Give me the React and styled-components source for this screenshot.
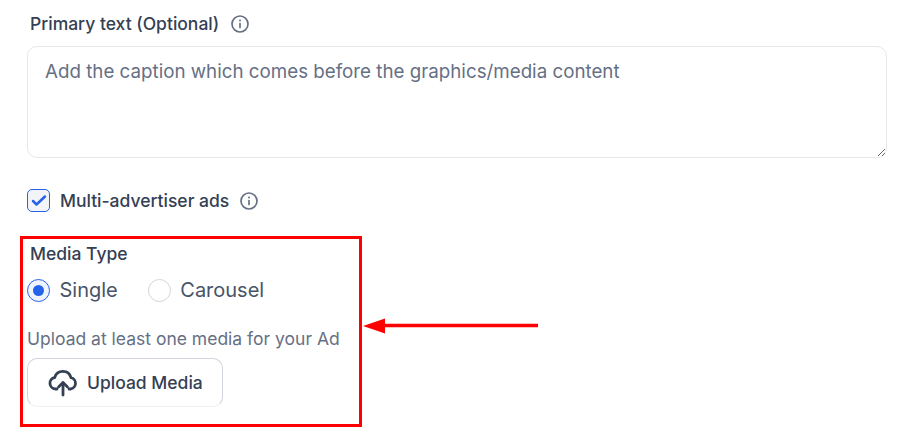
import React from "react";
import styled, { createGlobalStyle } from "styled-components";

const GlobalStyle = createGlobalStyle`
  html, body {
    margin: 0;
    padding: 0;
    background: #fff;
    font-family: Inter, "Noto Sans", sans-serif;
  }
`;

const Page = styled.div`
  position: relative;
  width: 910px;
  height: 432px;
  overflow: hidden;
  box-sizing: border-box;
  padding: 14px 23px 0 27px;
  display: flex;
  flex-direction: column;
`;

const LabelRow = styled.div`
  display: flex;
  align-items: center;
  gap: 12px;
  height: 20px;
  padding-left: 3px;
`;

const Label = styled.span`
  font-size: 17.5px;
  font-weight: 450;
  line-height: 20px;
  color: #344054;
`;

const InfoIcon = () => (
  <svg width="18" height="18" viewBox="0 0 18 18" fill="none" stroke="#667085" strokeWidth="1.7" strokeLinecap="round">
    <circle cx="9" cy="9" r="8" />
    <path d="M9 8.500v4" />
    <path d="M9 5.500v.1" strokeWidth="2" />
  </svg>
);

const TextArea = styled.textarea`
  display: block;
  box-sizing: border-box;
  width: 860px;
  height: 112px;
  margin-top: 12px;
  padding: 12px 17px;
  border: 1px solid #e4e7ec;
  border-radius: 10px;
  outline: none;
  font-family: inherit;
  font-size: 18.75px;
  line-height: 26px;
  color: #344054;

  &::placeholder {
    color: #667085;
    opacity: 1;
  }
`;

const CheckRow = styled.div`
  display: flex;
  align-items: center;
  gap: 10px;
  margin-top: 31px;
  height: 23px;
`;

const CheckBox = styled.span`
  box-sizing: border-box;
  width: 23px;
  height: 23px;
  display: flex;
  align-items: center;
  justify-content: center;
  background: #f2f4f7;
  border: 1.5px solid #2563eb;
  border-radius: 5px;
`;

const InfoGap = styled.span`
  display: flex;
  margin-left: 1px;
`;

const MediaTitle = styled(Label)`
  display: block;
  margin-top: 32px;
  padding-left: 3px;
`;

const RadioGroup = styled.div`
  display: flex;
  align-items: center;
  gap: 30px;
  margin-top: 14px;
`;

const RadioItem = styled.label`
  display: flex;
  align-items: center;
  gap: 9.5px;
  font-size: 20px;
  line-height: 24px;
  color: #475467;
`;

const RadioDot = styled.span`
  box-sizing: border-box;
  width: 23px;
  height: 23px;
  border-radius: 50%;
  display: flex;
  align-items: center;
  justify-content: center;
  background: ${(props) => (props.$on ? "#eff4ff" : "#fff")};
  border: ${(props) => (props.$on ? "1.5px solid #2563eb" : "1px solid #d0d5dd")};

  &::after {
    content: "";
    display: ${(props) => (props.$on ? "block" : "none")};
    width: 11px;
    height: 11px;
    border-radius: 50%;
    background: #2563eb;
  }
`;

const Hint = styled.div`
  margin-top: 27px;
  font-size: 17.5px;
  line-height: 20px;
  color: #667085;
`;

const UploadButton = styled.button`
  display: flex;
  align-items: center;
  gap: 9px;
  box-sizing: border-box;
  width: 196px;
  height: 49px;
  margin-top: 9px;
  padding: 0 0 0 20px;
  background: #fff;
  border: 1px solid #d0d5dd;
  border-bottom-color: #eef0f4;
  border-radius: 10px;
  font-family: inherit;
  font-size: 17.5px;
  font-weight: 450;
  color: #344054;
`;

const Highlight = styled.div`
  position: absolute;
  left: 20px;
  top: 236px;
  width: 342px;
  height: 191px;
  box-sizing: border-box;
  border: 3px solid #ff0000;
  pointer-events: none;
`;

const Arrow = styled.svg`
  position: absolute;
  left: 360px;
  top: 315px;
`;

export default function App() {
  return (
    <Page>
      <GlobalStyle />
      <LabelRow>
        <Label>Primary text (Optional)</Label>
        <InfoIcon />
      </LabelRow>
      <TextArea placeholder="Add the caption which comes before the graphics/media content" />
      <CheckRow>
        <CheckBox>
          <svg width="16" height="13" viewBox="0 0 16 13" fill="none" stroke="#2563eb" strokeWidth="2.500" strokeLinecap="round" strokeLinejoin="round">
            <path d="M2 7l3.500 3.500L14 2.500" />
          </svg>
        </CheckBox>
        <Label>Multi-advertiser ads</Label>
        <InfoGap>
          <InfoIcon />
        </InfoGap>
      </CheckRow>
      <MediaTitle>Media Type</MediaTitle>
      <RadioGroup>
        <RadioItem>
          <RadioDot $on />
          Single
        </RadioItem>
        <RadioItem>
          <RadioDot />
          Carousel
        </RadioItem>
      </RadioGroup>
      <Hint>Upload at least one media for your Ad</Hint>
      <UploadButton>
        <svg width="30" height="28" viewBox="0 0 30 28" fill="none" stroke="#344054" strokeWidth="2.800" strokeLinecap="round" strokeLinejoin="round">
          <path d="M9 20H7.500a5.800 5.800 0 0 1-.8-11.500A8.500 8.500 0 0 1 23 8.600a5.800 5.800 0 0 1-.5 11.400H21" />
          <path d="M15 26V14" />
          <path d="M10.500 18l4.500-4.500 4.500 4.500" />
        </svg>
        Upload Media
      </UploadButton>
      <Highlight />
      <Arrow width="180" height="22" viewBox="0 0 180 22">
        <path d="M3 11L25 3.500V18.500Z" fill="#ff0000" />
        <path d="M24 10.500H178" stroke="#ff0000" strokeWidth="3.500" />
      </Arrow>
    </Page>
  );
}
